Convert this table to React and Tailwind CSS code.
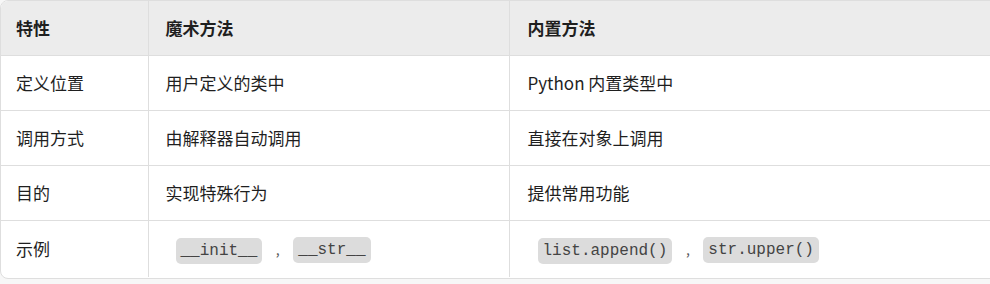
import React from 'react';

const rows = [
  { feature: '定义位置', magic: '用户定义的类中', builtin: 'Python 内置类型中' },
  { feature: '调用方式', magic: '由解释器自动调用', builtin: '直接在对象上调用' },
  { feature: '目的', magic: '实现特殊行为', builtin: '提供常用功能' },
];

const Code = ({ children }) => (
  <code className="inline-block h-[26px] leading-[26px] px-[5px] rounded-[5px] bg-[#dcdcdc] text-[#444] text-[16px] font-['Liberation_Mono','DejaVu_Sans_Mono',monospace] align-middle">
    {children}
  </code>
);

const Pair = ({ a, b }) => (
  <span className="inline-flex items-center mt-[2px]">
    <span className="ml-[10px]"><Code>{a}</Code></span>
    <span className="w-[31px] text-center text-[#555] text-[14px]">,</span>
    <Code>{b}</Code>
  </span>
);

export default function App() {
  return (
    <div className="w-[990px] h-[284px] overflow-hidden bg-[#f7f7f7] font-['Noto_Sans_CJK_SC','Noto_Sans',sans-serif] text-[#1f1f1f]">
      <div className="w-[1000px] h-[279px] bg-white border border-[#dedede] rounded-[8px] overflow-hidden">
        <table className="w-full border-collapse text-[17px]">
          <colgroup>
            <col className="w-[147px]" />
            <col className="w-[361px]" />
            <col />
          </colgroup>
          <thead>
            <tr className="h-[54px] bg-[#ececec] border-b border-[#dedede]">
              <th className="text-left font-bold pl-[15px]">特性</th>
              <th className="text-left font-bold pl-[17px] border-l border-[#dedede]">魔术方法</th>
              <th className="text-left font-bold pl-[18px] border-l border-[#dedede]">内置方法</th>
            </tr>
          </thead>
          <tbody>
            {rows.map((r) => (
              <tr key={r.feature} className="h-[55px] border-b border-[#dedede]">
                <td className="pl-[15px]">{r.feature}</td>
                <td className="pl-[17px] border-l border-[#dedede]">{r.magic}</td>
                <td className="pl-[18px] border-l border-[#dedede]">{r.builtin}</td>
              </tr>
            ))}
            <tr className="h-[57px]">
              <td className="pl-[15px]">示例</td>
              <td className="pl-[17px] border-l border-[#dedede]"><Pair a="__init__" b="__str__" /></td>
              <td className="pl-[18px] border-l border-[#dedede]"><Pair a="list.append()" b="str.upper()" /></td>
            </tr>
          </tbody>
        </table>
      </div>
    </div>
  );
}
